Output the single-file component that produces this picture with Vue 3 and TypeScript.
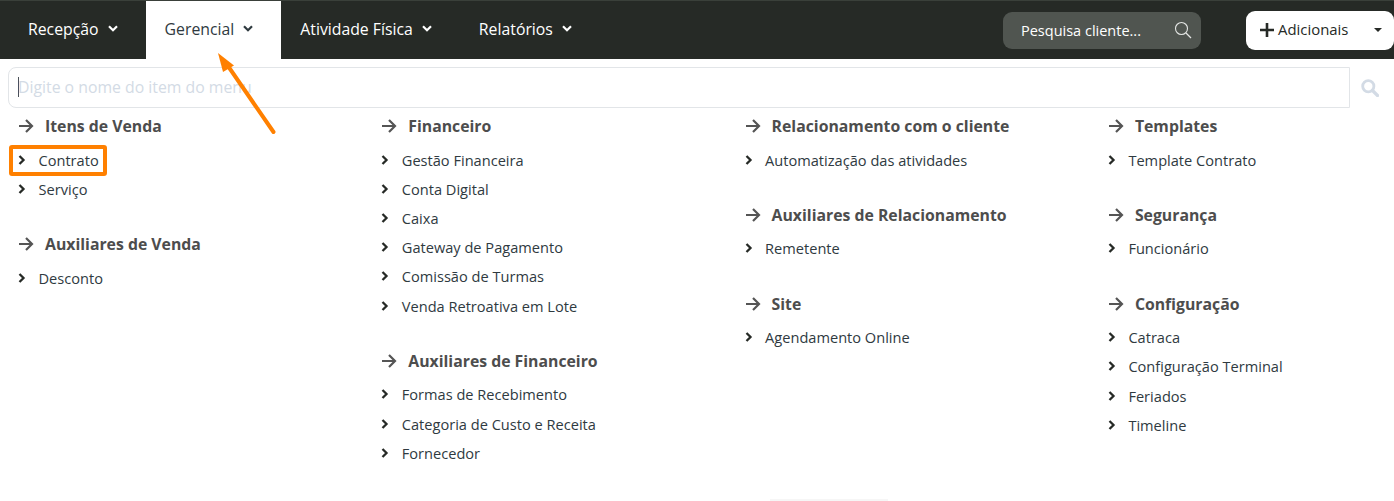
<script setup lang="ts">
interface Group { title: string; items: string[] }
const nav = [
  { label: 'Recepção', active: false },
  { label: 'Gerencial', active: true },
  { label: 'Atividade Física', active: false },
  { label: 'Relatórios', active: false },
]
const columns: Group[][] = [
  [
    { title: 'Itens de Venda', items: ['Contrato', 'Serviço'] },
    { title: 'Auxiliares de Venda', items: ['Desconto'] },
  ],
  [
    { title: 'Financeiro', items: ['Gestão Financeira', 'Conta Digital', 'Caixa', 'Gateway de Pagamento', 'Comissão de Turmas', 'Venda Retroativa em Lote'] },
    { title: 'Auxiliares de Financeiro', items: ['Formas de Recebimento', 'Categoria de Custo e Receita', 'Fornecedor'] },
  ],
  [
    { title: 'Relacionamento com o cliente', items: ['Automatização das atividades'] },
    { title: 'Auxiliares de Relacionamento', items: ['Remetente'] },
    { title: 'Site', items: ['Agendamento Online'] },
  ],
  [
    { title: 'Templates', items: ['Template Contrato'] },
    { title: 'Segurança', items: ['Funcionário'] },
    { title: 'Configuração', items: ['Catraca', 'Configuração Terminal', 'Feriados', 'Timeline'] },
  ],
]
</script>

<template>
  <div class="page">
    <header class="topbar">
      <nav class="nav">
        <a v-for="n in nav" :key="n.label" class="nav-item" :class="{ active: n.active }">
          {{ n.label }}
          <svg class="chev" width="10" height="7" viewBox="0 0 10 7"><path d="M1 1.200 5 5.200 9 1.200" fill="none" stroke="currentColor" stroke-width="2.200" /></svg>
        </a>
      </nav>
      <div class="client-search">
        <span>Pesquisa cliente...</span>
        <svg width="18" height="18" viewBox="0 0 18 18"><circle cx="7.500" cy="7.500" r="6" fill="none" stroke="#e4e6e4" stroke-width="1.100" /><path d="M12 12l5 5" stroke="#e4e6e4" stroke-width="1.300" /></svg>
      </div>
      <div class="add-btn">
        <svg width="14" height="14" viewBox="0 0 14 14"><path d="M7 0v14M0 7h14" stroke="#262a26" stroke-width="2.600" /></svg>
        <span class="add-label">Adicionais</span>
        <span class="caret"></span>
      </div>
    </header>

    <div class="menu-search">
      <div class="menu-input"><i class="cursor"></i><span>Digite o nome do item do menu</span></div>
      <svg class="menu-icon" width="18" height="18" viewBox="0 0 18 18"><circle cx="7.300" cy="7.300" r="5.600" fill="none" stroke="#d3dbe5" stroke-width="2.800" /><path d="M11.500 11.500l5 5" stroke="#d3dbe5" stroke-width="3.200" stroke-linecap="round" /></svg>
    </div>

    <main class="columns">
      <section v-for="(col, i) in columns" :key="i" class="column">
        <div v-for="g in col" :key="g.title" class="group">
          <h3 class="title">
            <svg width="16" height="14" viewBox="0 0 16 14"><path d="M1 7h13M8 1 14 7l-6 6" fill="none" stroke="#555" stroke-width="2.200" /></svg>
            {{ g.title }}
          </h3>
          <ul class="list">
            <li v-for="it in g.items" :key="it" class="item">
              <svg width="8" height="10" viewBox="0 0 8 10"><path d="M1.500 1 5.500 5 1.500 9" fill="none" stroke="#262a26" stroke-width="2.300" /></svg>
              {{ it }}
            </li>
          </ul>
        </div>
      </section>
    </main>

    <div class="highlight"></div>
    <svg class="arrow" width="62" height="84" viewBox="0 0 62 84">
      <path d="M55.500 79 10 13" fill="none" stroke="#ff8000" stroke-width="4" stroke-linecap="round" />
      <path d="M0 0 16 12.500 5 19Z" fill="#ff8000" />
    </svg>
    <div class="ghost"></div>
  </div>
</template>

<style>
html, body { margin: 0; background: #fff; }
</style>

<style scoped>
.page {
  position: relative;
  width: 1394px;
  height: 501px;
  overflow: hidden;
  background: #fff;
  font-family: "Open Sans", sans-serif;
  color: #2f3a3f;
}
.topbar {
  display: flex;
  align-items: center;
  height: 59px;
  box-sizing: border-box;
  border-top: 1px solid #3a403a;
  background: #262a26;
}
.nav { display: flex; align-self: stretch; }
.nav-item {
  display: flex;
  align-items: center;
  gap: 9px;
  padding: 0 28px 3px 19px;
  color: #fff;
  font-size: 15.800px;
}
.nav-item:first-child { padding-left: 28px; }
.nav-item.active { background: #fff; color: #2f3a3f; }
.client-search {
  display: flex;
  align-items: center;
  justify-content: space-between;
  box-sizing: border-box;
  width: 198px;
  height: 37px;
  margin-left: auto;
  padding: 0 9px 0 18px;
  border-radius: 9px;
  background: #505550;
  color: #fff;
  font-size: 14.500px;
  font-weight: 500;
}
.add-btn {
  display: flex;
  align-items: center;
  box-sizing: border-box;
  width: 148px;
  height: 39px;
  margin: 0 0 0 45px;
  padding-left: 14px;
  border-radius: 9px;
  background: #fff;
  color: #262a26;
  font-size: 14.900px;
}
.add-label { margin-left: 4px; margin-top: -3px; }
.caret {
  margin-left: auto;
  margin-right: 12px;
  border: 4px solid transparent;
  border-top-color: #262a26;
  border-bottom: 0;
}
.menu-search {
  display: flex;
  align-items: center;
  margin: 8px 0 0 8px;
}
.menu-input {
  display: flex;
  align-items: center;
  box-sizing: border-box;
  width: 1342px;
  height: 41px;
  padding: 0 0 2px 9px;
  border: 1px solid #e2e5e8;
  border-radius: 8px 0 0 8px;
  color: #d3dbe5;
  font-size: 15.800px;
}
.cursor { width: 1px; height: 20px; background: #4a5058; margin-right: -1px; }
.menu-icon { margin-left: 11px; }
.columns {
  display: grid;
  grid-template-columns: repeat(4, 363.300px);
  padding: 6px 0 0 18px;
}
.group { margin-bottom: 28.500px; }
.title {
  display: flex;
  align-items: center;
  gap: 11px;
  height: 24px;
  margin: 0 0 7.100px;
  color: #4d4d4d;
  font-size: 15.800px;
  font-weight: 700;
}
.list { margin: 0; padding: 0; list-style: none; }
.item {
  display: flex;
  align-items: center;
  gap: 12.500px;
  height: 29.200px;
  font-size: 14.600px;
}
.highlight {
  position: absolute;
  left: 8.500px;
  top: 144.500px;
  width: 98px;
  height: 31px;
  box-sizing: border-box;
  border: 4px solid #ff8000;
  border-radius: 3px;
}
.arrow { position: absolute; left: 218px; top: 53px; }
.ghost {
  position: absolute;
  left: 770px;
  top: 499px;
  width: 118px;
  height: 2px;
  background: #f6f6f6;
}
</style>
